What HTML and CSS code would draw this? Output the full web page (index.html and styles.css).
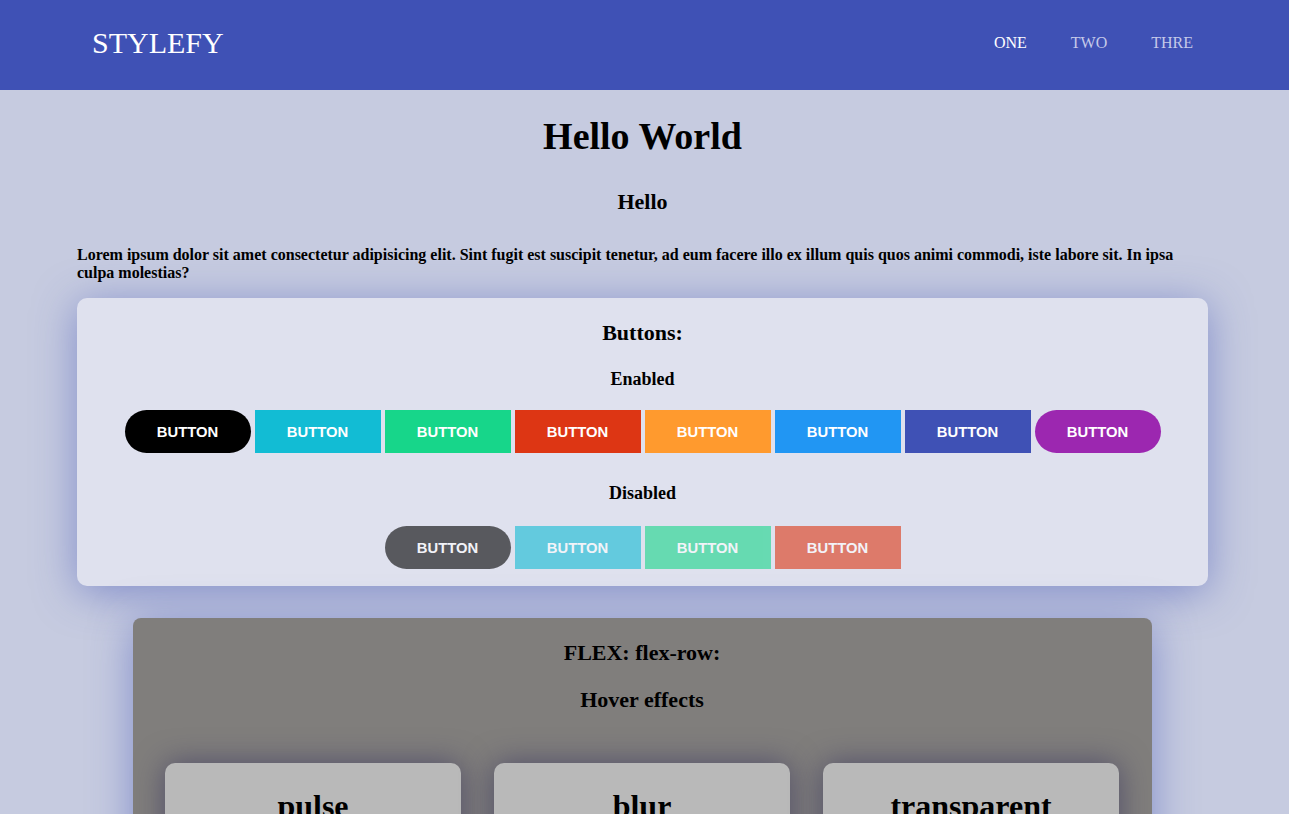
FILE: index.html
```html
<!DOCTYPE html>
<html lang="en">
<head>
<meta charset="utf-8">
<title>Stylefy</title>
<link rel="stylesheet" href="styles.css">
</head>
<body>
<header class="topbar">
  <div class="logo">STYLEFY</div>
  <nav class="nav">
    <a class="nav-item active">ONE</a>
    <a class="nav-item">TWO</a>
    <a class="nav-item">THRE</a>
  </nav>
</header>
<main class="main">
  <h1 class="title">Hello World</h1>
  <h3 class="subtitle">Hello</h3>
  <p class="intro">Lorem ipsum dolor sit amet consectetur adipisicing elit. Sint fugit est suscipit tenetur, ad eum facere illo ex illum quis quos animi commodi, iste labore sit. In ipsa culpa molestias?</p>

  <section class="card">
    <h2 class="card-title">Buttons:</h2>
    <h3 class="group-title">Enabled</h3>
    <div class="btn-row">
      <button class="btn pill black">BUTTON</button>
      <button class="btn cyan">BUTTON</button>
      <button class="btn green">BUTTON</button>
      <button class="btn red">BUTTON</button>
      <button class="btn orange">BUTTON</button>
      <button class="btn blue">BUTTON</button>
      <button class="btn indigo">BUTTON</button>
      <button class="btn pill purple">BUTTON</button>
    </div>
    <h3 class="group-title disabled-title">Disabled</h3>
    <div class="btn-row">
      <button class="btn pill black disabled">BUTTON</button>
      <button class="btn cyan disabled">BUTTON</button>
      <button class="btn green disabled">BUTTON</button>
      <button class="btn red disabled">BUTTON</button>
    </div>
  </section>

  <section class="flex-section">
    <h2 class="flex-title">FLEX: flex-row:</h2>
    <h2 class="flex-sub">Hover effects</h2>
    <div class="flex-row">
      <div class="fx-card"><h2>pulse</h2></div>
      <div class="fx-card"><h2>blur</h2></div>
      <div class="fx-card"><h2>transparent</h2></div>
    </div>
  </section>
</main>
</body>
</html>
```

FILE: styles.css
```css
html, body {
  margin: 0;
  padding: 0;
}
body {
  background: #c6cbe0;
  font-family: "Liberation Serif", "Times New Roman", serif;
  color: #000;
  overflow: hidden;
  height: 814px;
}
.topbar {
  height: 90px;
  background: #3f51b5;
  display: flex;
  align-items: center;
  justify-content: space-between;
  padding: 0 96px 0 92px;
  box-sizing: border-box;
}
.logo {
  color: #fff;
  font-size: 30px;
  margin-top: -4px;
}
.nav {
  display: flex;
  gap: 44px;
  margin-top: -4px;
}
.nav-item {
  font-size: 16px;
  color: #c5cae9;
  text-decoration: none;
  white-space: nowrap;
}
.nav-item.active {
  color: #fff;
}
.main {
  width: 1131px;
  margin-left: 77px;
}
.title {
  margin: 0;
  padding-top: 24px;
  font-size: 38px;
  text-align: center;
  line-height: 44px;
}
.subtitle {
  font-size: 22px;
  text-align: center;
  margin: 31px 0 0;
  line-height: 25px;
}
.intro {
  font-size: 16px;
  font-weight: bold;
  line-height: 18px;
  margin: 32px 0 16px;
}
.card {
  background: #dfe1ee;
  border-radius: 10px;
  box-shadow: 0 6px 42px rgba(63, 81, 181, 0.5);
  padding: 22px 0 17px;
}
.card-title {
  font-size: 22px;
  line-height: 25px;
  text-align: center;
  margin: 0;
}
.group-title {
  font-size: 18px;
  line-height: 21px;
  text-align: center;
  margin: 24px 0 20px;
}
.disabled-title {
  margin: 30px 0 22px;
}
.btn-row {
  display: flex;
  justify-content: center;
  gap: 4px;
}
.btn {
  width: 126px;
  height: 43px;
  border: 0;
  padding: 0;
  color: #fff;
  font-family: "Liberation Sans", Arial, sans-serif;
  font-weight: bold;
  font-size: 14.8px;
  cursor: pointer;
}
.pill { border-radius: 22px; }
.black { background: #000; }
.cyan { background: #12bcd4; }
.green { background: #17d68a; }
.red { background: #dd3614; }
.orange { background: #ff9a2e; }
.blue { background: #2196f3; }
.indigo { background: #3f51b5; }
.purple { background: #9c27b0; }
.disabled { opacity: 0.6; }

.flex-section {
  width: 1019px;
  margin: 32px auto 0;
  box-sizing: border-box;
  background: #807e7c;
  border-radius: 8px;
  box-shadow: 0 6px 42px rgba(63, 81, 181, 0.5);
  padding: 22px 33px 40px 32px;
}
.flex-title, .flex-sub {
  font-size: 22px;
  line-height: 25px;
  text-align: center;
  margin: 0;
}
.flex-sub {
  margin-top: 22px;
}
.flex-row {
  display: flex;
  gap: 33px;
  margin-top: 51px;
}
.fx-card {
  width: 296px;
  height: 200px;
  background: #b9b9b9;
  border-radius: 10px;
  box-shadow: 0 0 30px rgba(40, 38, 90, 0.55);
  padding-top: 25px;
  box-sizing: border-box;
}
.fx-card h2 {
  margin: 0;
  font-size: 32px;
  text-align: center;
}
```
